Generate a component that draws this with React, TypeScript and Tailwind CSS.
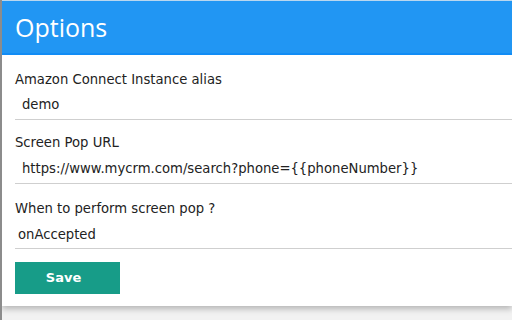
export default function App() {
  return (
    <div className="w-[512px] h-[320px] overflow-hidden bg-[#f2f2f2] border-l-2 border-[#8c8c8c] font-['DejaVu_Sans',sans-serif]">
      <div className="bg-white shadow-[0_3px_6px_rgba(0,0,0,0.25)] h-[306px] border-t border-[#b9d7ef]">
        <div className="h-[54px] bg-[#2196f3] border-b-2 border-[#118cf5] flex items-center pl-[13px]">
          <h1 className="text-white text-[25px] font-['Open_Sans',sans-serif] leading-none">Options</h1>
        </div>
        <div className="pl-[13px] pt-[17px] text-[13.2px] text-[#222]">
          <label className="block leading-[16px]">Amazon Connect Instance alias</label>
          <div className="h-[32px] pl-[7px] pt-[3px] flex items-center border-b border-[#cfcfcf]">demo</div>
          <label className="block leading-[16px] mt-[15px]">Screen Pop URL</label>
          <div className="h-[33px] pl-[7px] pt-[4px] flex items-center border-b border-[#cfcfcf]">
            https://www.mycrm.com/search?phone={'{{phoneNumber}}'}
          </div>
          <label className="block leading-[16px] mt-[17px]">When to perform screen pop ?</label>
          <div className="h-[32px] pl-[3px] pt-[4px] flex items-center border-b border-[#cfcfcf]">onAccepted</div>
          <button className="mt-[13px] w-[105px] h-[32px] bg-[#179c88] text-white font-bold text-[13px] flex items-center justify-center pr-[8px]">
            Save
          </button>
        </div>
      </div>
    </div>
  )
}
